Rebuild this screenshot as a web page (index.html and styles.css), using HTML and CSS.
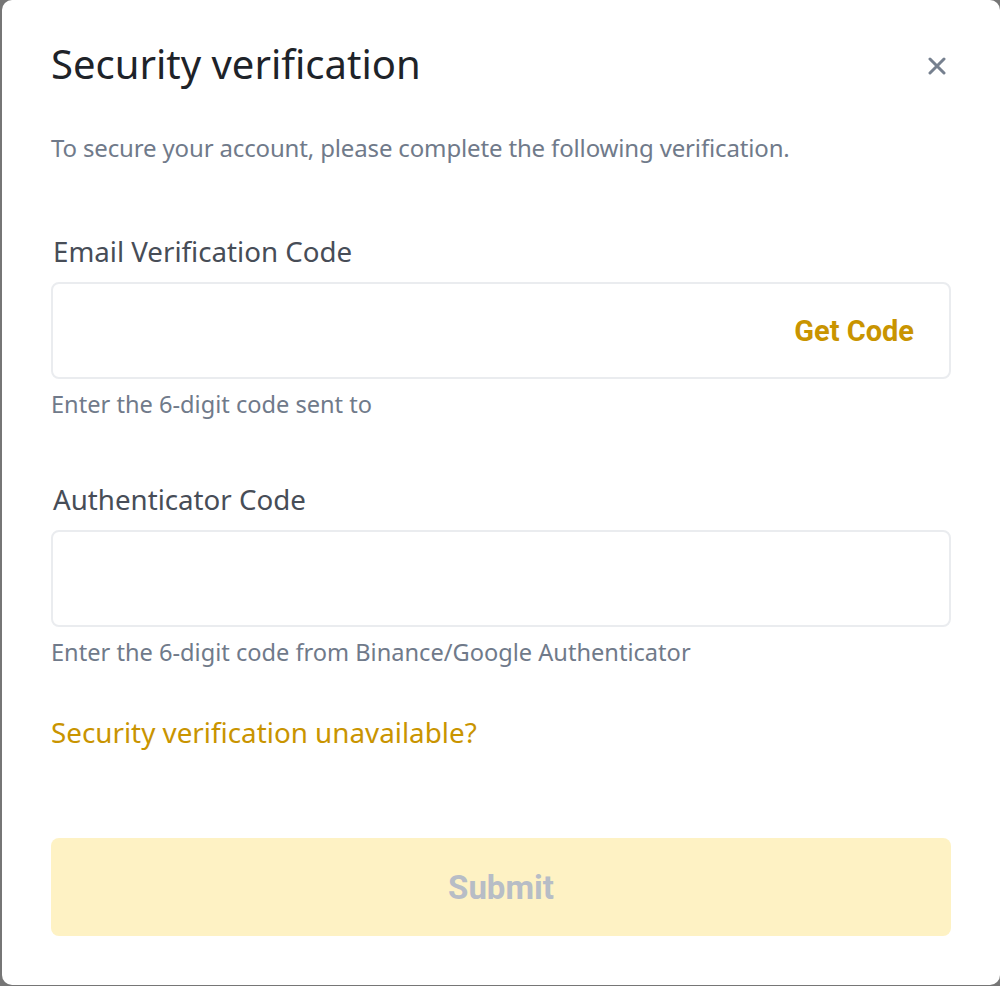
FILE: index.html
```html
<!DOCTYPE html>
<html lang="en">
<head>
    <meta charset="UTF-8">
    <meta name="viewport" content="width=device-width, initial-scale=1.0">
    <title>Security verification</title>
    <link rel="stylesheet" href="styles.css">
</head>
<body>
    <div class="modal">
        <div class="modal-header">
            <h1 class="title">Security verification</h1>
            <button class="close-btn" aria-label="Close">
                <svg width="18" height="18" viewBox="0 0 18 18">
                    <path d="M2 2 L16 16 M16 2 L2 16" stroke="#76808f" stroke-width="3" stroke-linecap="round" fill="none"/>
                </svg>
            </button>
        </div>
        <p class="desc">To secure your account, please complete the following verification.</p>

        <!-- 邮箱验证码 -->
        <div class="field first">
            <label class="field-label">Email Verification Code</label>
            <div class="input-box">
                <input type="text">
                <span class="get-code">Get Code</span>
            </div>
            <div class="hint">Enter the 6-digit code sent to</div>
        </div>

        <!-- 谷歌验证码 -->
        <div class="field">
            <label class="field-label">Authenticator Code</label>
            <div class="input-box">
                <input type="text">
            </div>
            <div class="hint">Enter the 6-digit code from Binance/Google Authenticator</div>
        </div>

        <a class="help-link" href="#">Security verification unavailable?</a>

        <button class="submit-btn" disabled>Submit</button>
    </div>
</body>
</html>
```

FILE: styles.css
```css
/* 页面基础样式 */
body {
    margin: 0;
    padding: 0;
    overflow: hidden;
    background: #767676;
    font-family: 'Noto Sans', 'Open Sans', sans-serif;
}
.modal {
    box-sizing: border-box;
    width: 998px;
    height: 985px;
    margin-left: 2px;
    padding: 39px 49px 0 49px;
    background: #fff;
    border-radius: 10px;
}
.modal-header {
    display: flex;
    justify-content: space-between;
    align-items: center;
    height: 50px;
}
.title {
    margin: 0;
    font-size: 40px;
    line-height: 50px;
    font-weight: 400;
    color: #1e2329;
}
.close-btn {
    display: flex;
    padding: 0;
    margin: 3px 5px 0 0;
    border: none;
    background: none;
    cursor: pointer;
}
.desc {
    margin: 43px 0 0 0;
    font-size: 24px;
    line-height: 32px;
    letter-spacing: -0.15px;
    color: #707a8a;
}
/* 输入框区域 */
.field {
    display: flex;
    flex-direction: column;
    margin-top: 61px;
}
.field.first {
    margin-top: 69px;
}
.field-label {
    font-size: 27.7px;
    line-height: 36px;
    color: #474d57;
    padding-left: 2px;
}
.input-box {
    box-sizing: border-box;
    display: flex;
    align-items: center;
    height: 97px;
    margin-top: 13px;
    padding: 0 35px 0 20px;
    border: 2px solid #eaecef;
    border-radius: 8px;
}
.input-box input {
    flex: 1;
    border: none;
    outline: none;
    font-size: 27px;
    background: transparent;
}
.get-code {
    font-family: 'Roboto', 'Liberation Sans', sans-serif;
    font-size: 29px;
    font-weight: 700;
    color: #c99400;
    cursor: pointer;
}
.hint {
    margin-top: 9px;
    font-size: 23.6px;
    line-height: 32px;
    color: #707a8a;
}
.help-link {
    display: block;
    margin-top: 46px;
    font-size: 27.8px;
    line-height: 36px;
    color: #c99400;
    text-decoration: none;
}
.submit-btn {
    display: block;
    width: 100%;
    height: 98px;
    margin-top: 88px;
    border: none;
    border-radius: 8px;
    background: #fef2c4;
    font-family: 'Roboto', 'Liberation Sans', sans-serif;
    font-size: 33px;
    font-weight: 700;
    color: #b7bdc6;
}
```
